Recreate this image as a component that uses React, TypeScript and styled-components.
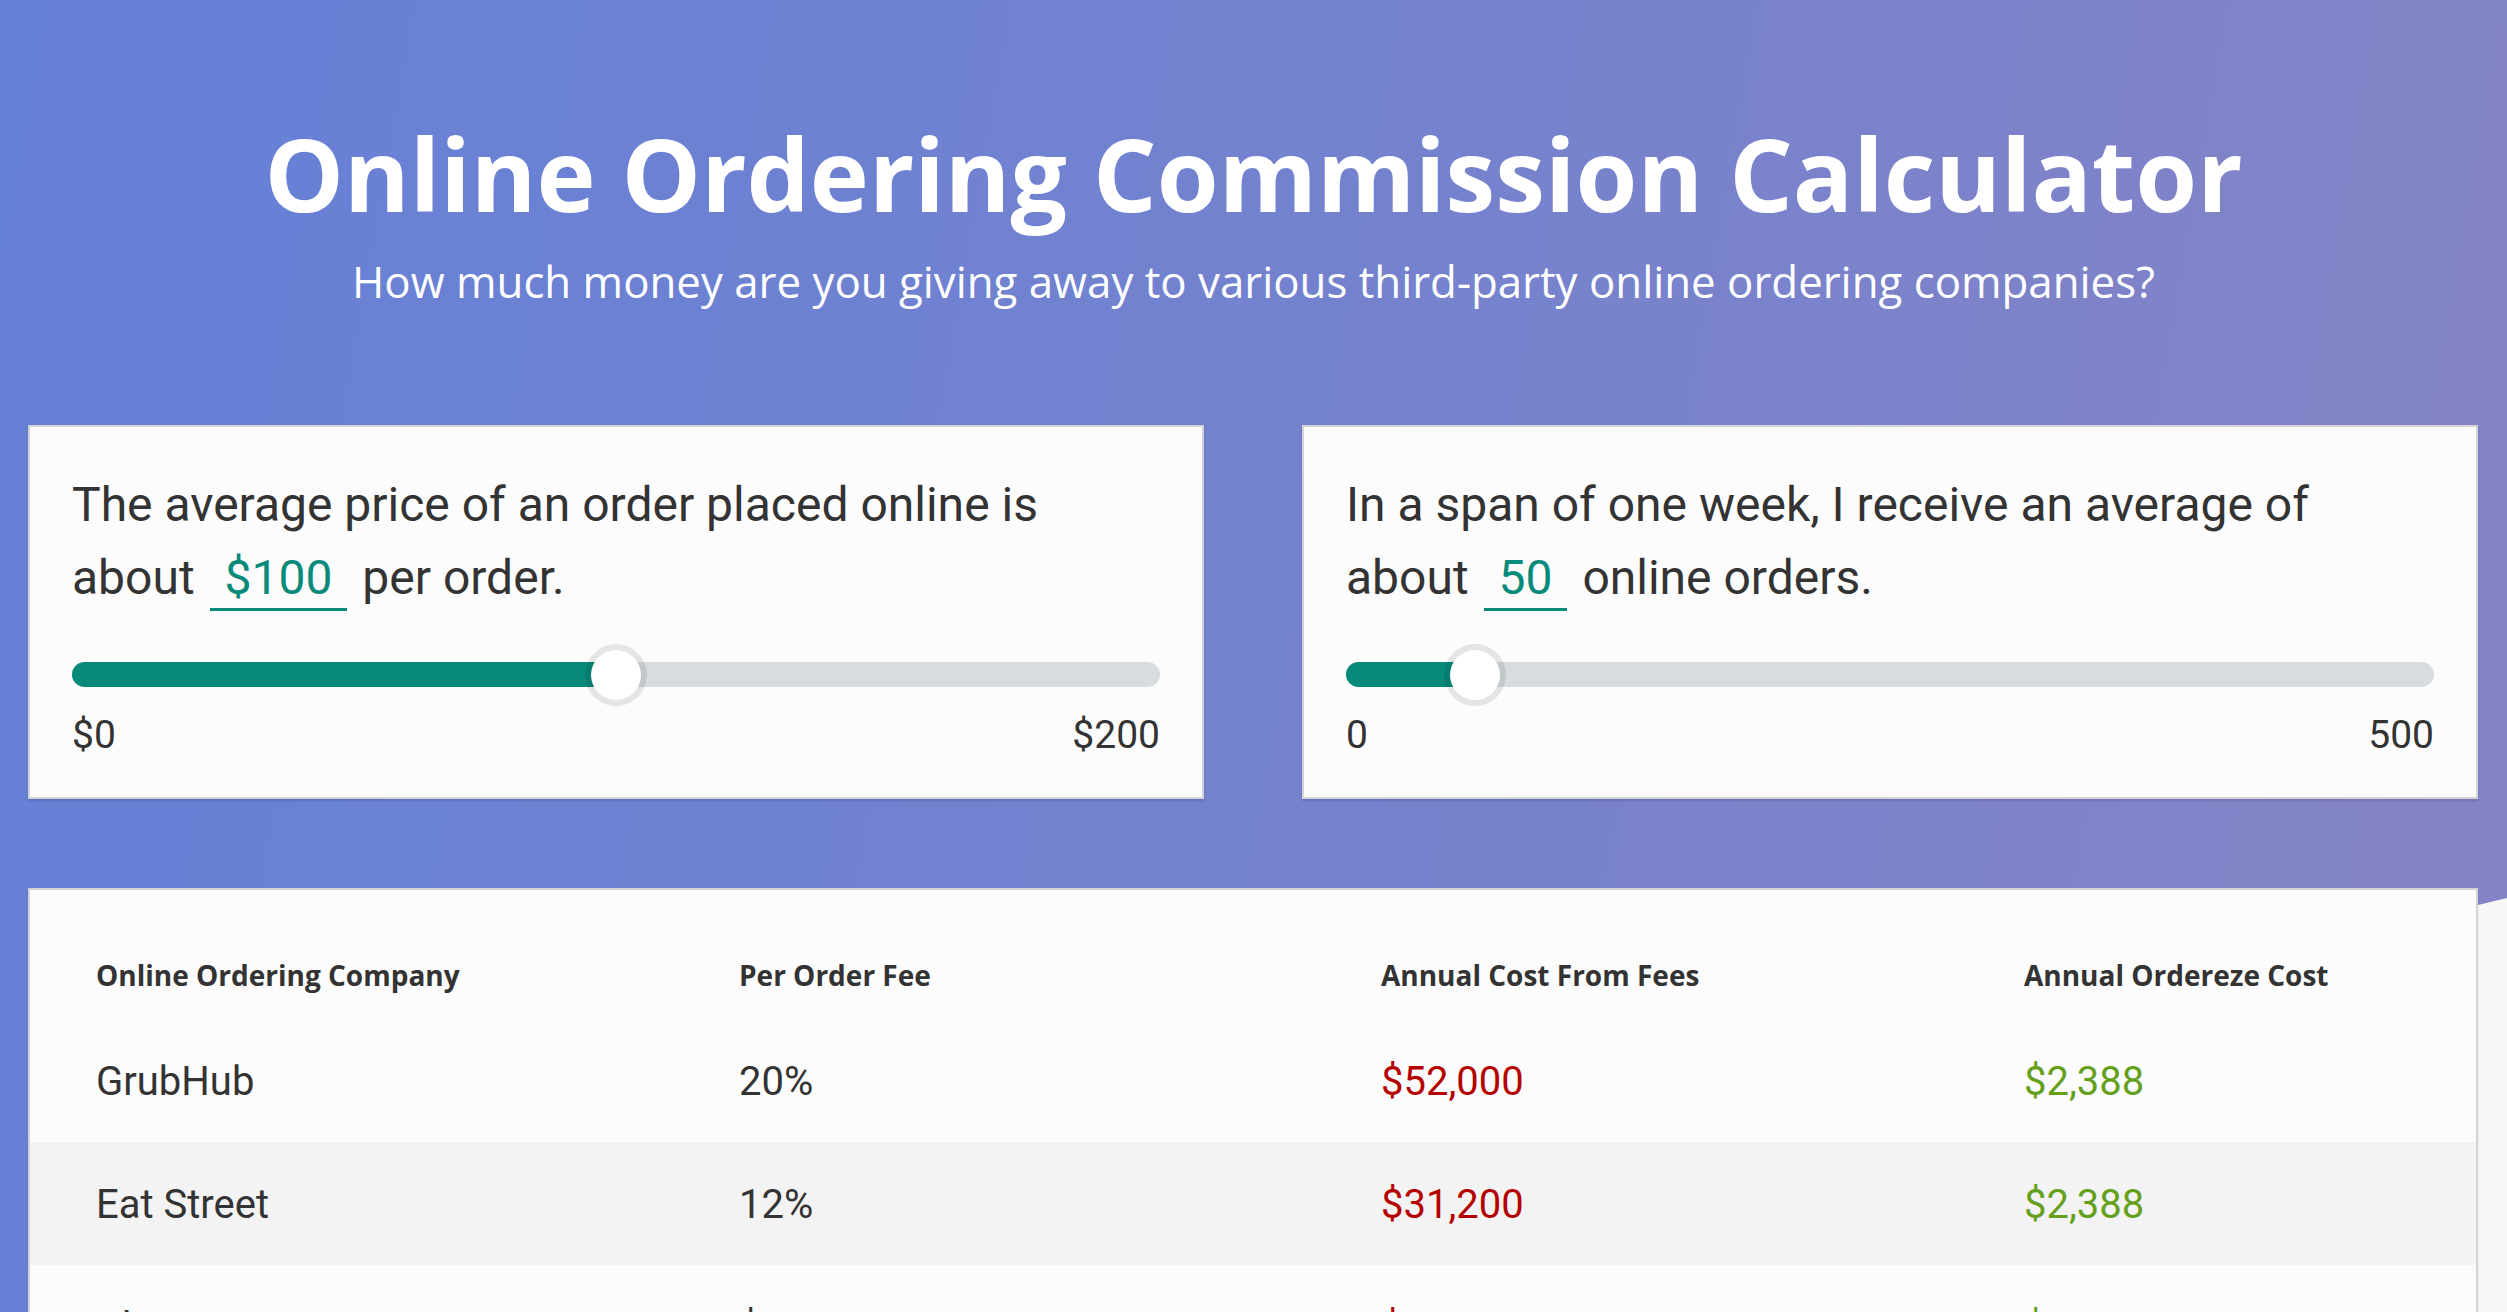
import React from "react";
import styled, { createGlobalStyle } from "styled-components";

const GlobalStyle = createGlobalStyle`
  html, body { margin: 0; padding: 0; }
  body { font-family: Roboto, "Liberation Sans", sans-serif; color: #333; }
  * { box-sizing: border-box; }
`;

const TEAL = "#088a7a";

const Page = styled.div`
  position: relative;
  min-height: 1312px;
  overflow: hidden;
  background: linear-gradient(100deg, #6580d7 0%, #7282cf 45%, #8684c5 100%);
  padding-top: 113px;
  &::before {
    content: "";
    position: absolute;
    inset: 0;
    background: linear-gradient(90deg, #eeeeee 0%, #f8f8f8 100%);
    clip-path: polygon(0 1503px, 100% 898px, 100% 100%, 0 100%);
    z-index: 0;
  }
`;

const Content = styled.div`
  position: relative;
  z-index: 1;
`;

const Header = styled.header`
  display: flex;
  flex-direction: column;
  align-items: center;
  color: #fff;
  font-family: "Open Sans", "Liberation Sans", sans-serif;
`;

const Title = styled.h1`
  margin: 0;
  font-size: 100px;
  line-height: 1.2;
  font-weight: 700;
`;

const Subtitle = styled.p`
  margin: 22px 0 0;
  font-size: 43.8px;
  line-height: 1.2;
  font-weight: 400;
`;

const CardsRow = styled.section`
  display: grid;
  grid-template-columns: 1fr 1fr;
  gap: 98px;
  padding: 0 29px 0 28px;
  margin-top: 117px;
`;

const Card = styled.div`
  background: #fcfcfc;
  border: 2px solid #d4d4d6;
  box-shadow: 0 2px 2px rgba(0, 0, 0, 0.12);
`;

const InputCard = styled(Card)`
  padding: 41px 42px 32px 42px;
`;

const Prompt = styled.p`
  margin: 0;
  max-width: 1040px;
  font-size: 48px;
  line-height: 73px;
  color: #333;
  font-weight: 400;
`;

const ValueField = styled.span`
  display: inline-block;
  margin: 0 3px;
  padding: 0 15px;
  line-height: 60px;
  color: ${TEAL};
  border-bottom: 3px solid ${TEAL};
  vertical-align: baseline;
`;

const SliderWrap = styled.div`
  margin-top: 36px;
  height: 50px;
  display: flex;
  align-items: center;
`;

const Track = styled.div`
  position: relative;
  width: 100%;
  height: 25px;
  border-radius: 13px;
  background: #d7dcdf;
`;

const Fill = styled.div`
  height: 100%;
  border-radius: 13px 0 0 13px;
  background: ${TEAL};
`;

const Thumb = styled.div`
  position: absolute;
  top: 50%;
  width: 50px;
  height: 50px;
  border-radius: 50%;
  background: #fff;
  transform: translate(-50%, -50%);
  box-shadow: 0 0 0 6px rgba(0, 0, 0, 0.09);
`;

const Limits = styled.div`
  margin-top: 5px;
  display: flex;
  justify-content: space-between;
  font-size: 39px;
  line-height: 60px;
  color: #333;
`;

const TableCard = styled(Card)`
  margin: 89px 29px 0 28px;
`;

const Row = styled.div<{ $striped?: boolean; $head?: boolean }>`
  display: grid;
  grid-template-columns: 643px 642px 643px 1fr;
  padding-left: 66px;
  padding-top: ${(p) => (p.$head ? "0" : "3px")};
  height: ${(p) => (p.$head ? "129px" : "123px")};
  align-items: ${(p) => (p.$head ? "end" : "center")};
  padding-bottom: ${(p) => (p.$head ? "26px" : "0")};
  background: ${(p) => (p.$striped ? "#f3f3f3" : "transparent")};
`;

const HeadCell = styled.div`
  font-family: "Open Sans", "Liberation Sans", sans-serif;
  font-weight: 700;
  font-size: 28px;
  line-height: 1.2;
  color: #333;
`;

const Cell = styled.div<{ $tone?: "red" | "green" }>`
  font-size: 40px;
  line-height: 1.2;
  color: ${(p) => (p.$tone === "red" ? "#b50000" : p.$tone === "green" ? "#65a01d" : "#333")};
`;

function Slider({ value, max }: { value: number; max: number }) {
  const pct = value / max;
  const pos = `calc(25px + (100% - 50px) * ${pct})`;
  return (
    <SliderWrap>
      <Track>
        <Fill style={{ width: pos }} />
        <Thumb style={{ left: pos }} />
      </Track>
    </SliderWrap>
  );
}

const rows = [
  { name: "GrubHub", fee: "20%", cost: "$52,000", ordereze: "$2,388" },
  { name: "Eat Street", fee: "12%", cost: "$31,200", ordereze: "$2,388" },
  { name: "ChowNow", fee: "$119", cost: "$1,428", ordereze: "$2,388" },
];

export default function App() {
  return (
    <>
      <GlobalStyle />
      <Page>
        <Content>
          <Header>
            <Title>Online Ordering Commission Calculator</Title>
            <Subtitle>
              How much money are you giving away to various third-party online ordering companies?
            </Subtitle>
          </Header>

          <CardsRow>
            <InputCard>
              <Prompt>
                The average price of an order placed online is about{" "}
                <ValueField>$100</ValueField> per order.
              </Prompt>
              <Slider value={100} max={200} />
              <Limits>
                <span>$0</span>
                <span>$200</span>
              </Limits>
            </InputCard>
            <InputCard>
              <Prompt>
                In a span of one week, I receive an average of about{" "}
                <ValueField>50</ValueField> online orders.
              </Prompt>
              <Slider value={50} max={500} />
              <Limits>
                <span>0</span>
                <span>500</span>
              </Limits>
            </InputCard>
          </CardsRow>

          <TableCard>
            <Row $head>
              <HeadCell>Online Ordering Company</HeadCell>
              <HeadCell>Per Order Fee</HeadCell>
              <HeadCell>Annual Cost From Fees</HeadCell>
              <HeadCell>Annual Ordereze Cost</HeadCell>
            </Row>
            {rows.map((r, i) => (
              <Row key={r.name} $striped={i % 2 === 1}>
                <Cell>{r.name}</Cell>
                <Cell>{r.fee}</Cell>
                <Cell $tone="red">{r.cost}</Cell>
                <Cell $tone="green">{r.ordereze}</Cell>
              </Row>
            ))}
          </TableCard>
        </Content>
      </Page>
    </>
  );
}
